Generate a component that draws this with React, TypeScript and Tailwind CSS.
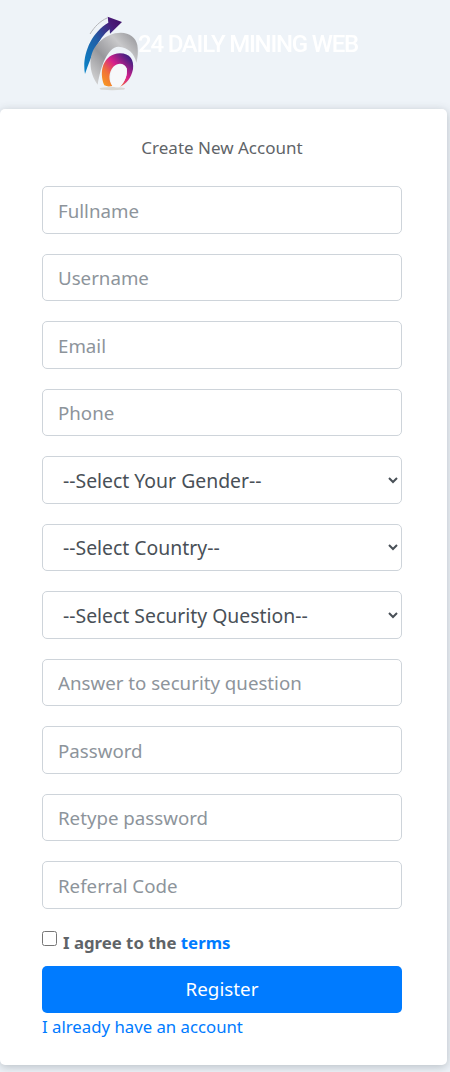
import React from 'react';

const inputCls =
  'block w-full h-[47.5px] px-[15px] pt-[1px] rounded-[5px] border border-[#ced4da] bg-white text-[18.7px] text-[#495057] outline-none placeholder:text-[#8d949b]';
const selectCls =
  'block w-full h-[47.5px] px-[16px] pt-[1px] rounded-[5px] border border-[#ced4da] bg-white text-[19.4px] text-[#495057] outline-none';

const Logo = () => (
  <svg width="75" height="85" viewBox="0 0 225 255" className="shrink-0 blur-[0.3px]">
    <defs>
      <linearGradient id="arrow" x1="0" y1="1" x2="1" y2="0">
        <stop offset="0" stopColor="#0a86c9" />
        <stop offset="0.45" stopColor="#1f5fa8" />
        <stop offset="0.8" stopColor="#4a1a78" />
        <stop offset="1" stopColor="#3d0f63" />
      </linearGradient>
      <linearGradient id="band" x1="0" y1="1" x2="1" y2="0">
        <stop offset="0" stopColor="#dedede" />
        <stop offset="0.4" stopColor="#97979b" />
        <stop offset="0.7" stopColor="#c8c8ca" />
        <stop offset="1" stopColor="#8f8f93" />
      </linearGradient>
      <linearGradient id="ring" x1="0" y1="1" x2="1" y2="0">
        <stop offset="0" stopColor="#f9a11b" />
        <stop offset="0.3" stopColor="#f0703a" />
        <stop offset="0.55" stopColor="#d61f8c" />
        <stop offset="0.85" stopColor="#4d1f83" />
        <stop offset="1" stopColor="#3d1a70" />
      </linearGradient>
    </defs>
    <ellipse cx="112" cy="236" rx="38" ry="5" fill="#cfccc4" opacity="0.7" />
    <path d="M45 72C60 48 75 34 96 24" fill="none" stroke="#b5b5b8" strokeWidth="3" />
    <path d="M30 192C20 140 45 70 100 38L98 20L141 36L105 71L104 58C70 85 48 140 30 192Z" fill="url(#arrow)" />
    <path d="M68 224C32 175 36 95 120 70C155 62 182 78 187 105C190 125 188 145 184 158C178 130 160 112 130 110C98 112 78 165 68 224Z" fill="url(#band)" />
    <path d="M88 226C70 185 85 132 135 130C165 130 178 150 174 178C168 205 155 222 135 230C150 215 158 195 155 175C150 160 130 155 115 170C100 188 100 210 112 228C103 230 95 230 88 226Z" fill="url(#ring)" />
    <path d="M112 228C104 212 104 190 116 172C130 158 150 163 155 176C158 195 150 215 135 230C127 233 118 232 112 228Z" fill="#f7f8fa" />
  </svg>
);

export default function App() {
  const font = { fontFamily: '"Noto Sans", "Open Sans", sans-serif' };
  return (
    <div style={font} className="h-[1072px] overflow-hidden bg-[#eef3f8]">
      <header className="h-[109px] pt-[10px] pl-[75px] flex items-start">
        <Logo />
        <span
          style={{ fontFamily: 'Roboto, sans-serif' }}
          className="-ml-[12px] mt-[20px] text-[24px] leading-[28px] font-medium text-white whitespace-nowrap tracking-[-1.2px] blur-[0.5px]"
        >
          24 DAILY MINING WEB
        </span>
      </header>

      <main className="w-[447px] h-[956px] bg-white rounded-[5px] shadow-[0_2px_10px_rgba(60,70,80,0.3)] px-[42px] pt-[27px]">
        <p className="text-center text-[17px] leading-[24px] text-[#5f6468] pr-[3px]">Create New Account</p>
        <form className="w-[360px] mt-[26px] flex flex-col gap-[20px]">
          <input className={inputCls} placeholder="Fullname" />
          <input className={inputCls} placeholder="Username" />
          <input className={inputCls} placeholder="Email" />
          <input className={inputCls} placeholder="Phone" />
          <select className={selectCls}><option>--Select Your Gender--</option></select>
          <select className={selectCls}><option>--Select Country--</option></select>
          <select className={selectCls}><option>--Select Security Question--</option></select>
          <input className={inputCls} placeholder="Answer to security question" />
          <input className={inputCls} placeholder="Password" />
          <input className={inputCls} placeholder="Retype password" />
          <input className={inputCls} placeholder="Referral Code" />
        </form>
        <label className="w-[360px] mt-[22px] flex items-start gap-[6px] text-[16.8px] leading-[24px] font-bold text-[#5f6468]">
          <input type="checkbox" className="w-[15px] h-[15px] mt-0" />
          <span>I agree to the <a className="text-[#007bff]">terms</a></span>
        </label>
        <button type="button" className="block w-[360px] h-[47px] mt-[11px] rounded-[5px] bg-[#007bff] text-white text-[18.8px]">
          Register
        </button>
        <a className="block mt-[2px] text-[16.75px] leading-[24px] text-[#007bff]">I already have an account</a>
      </main>
    </div>
  );
}
